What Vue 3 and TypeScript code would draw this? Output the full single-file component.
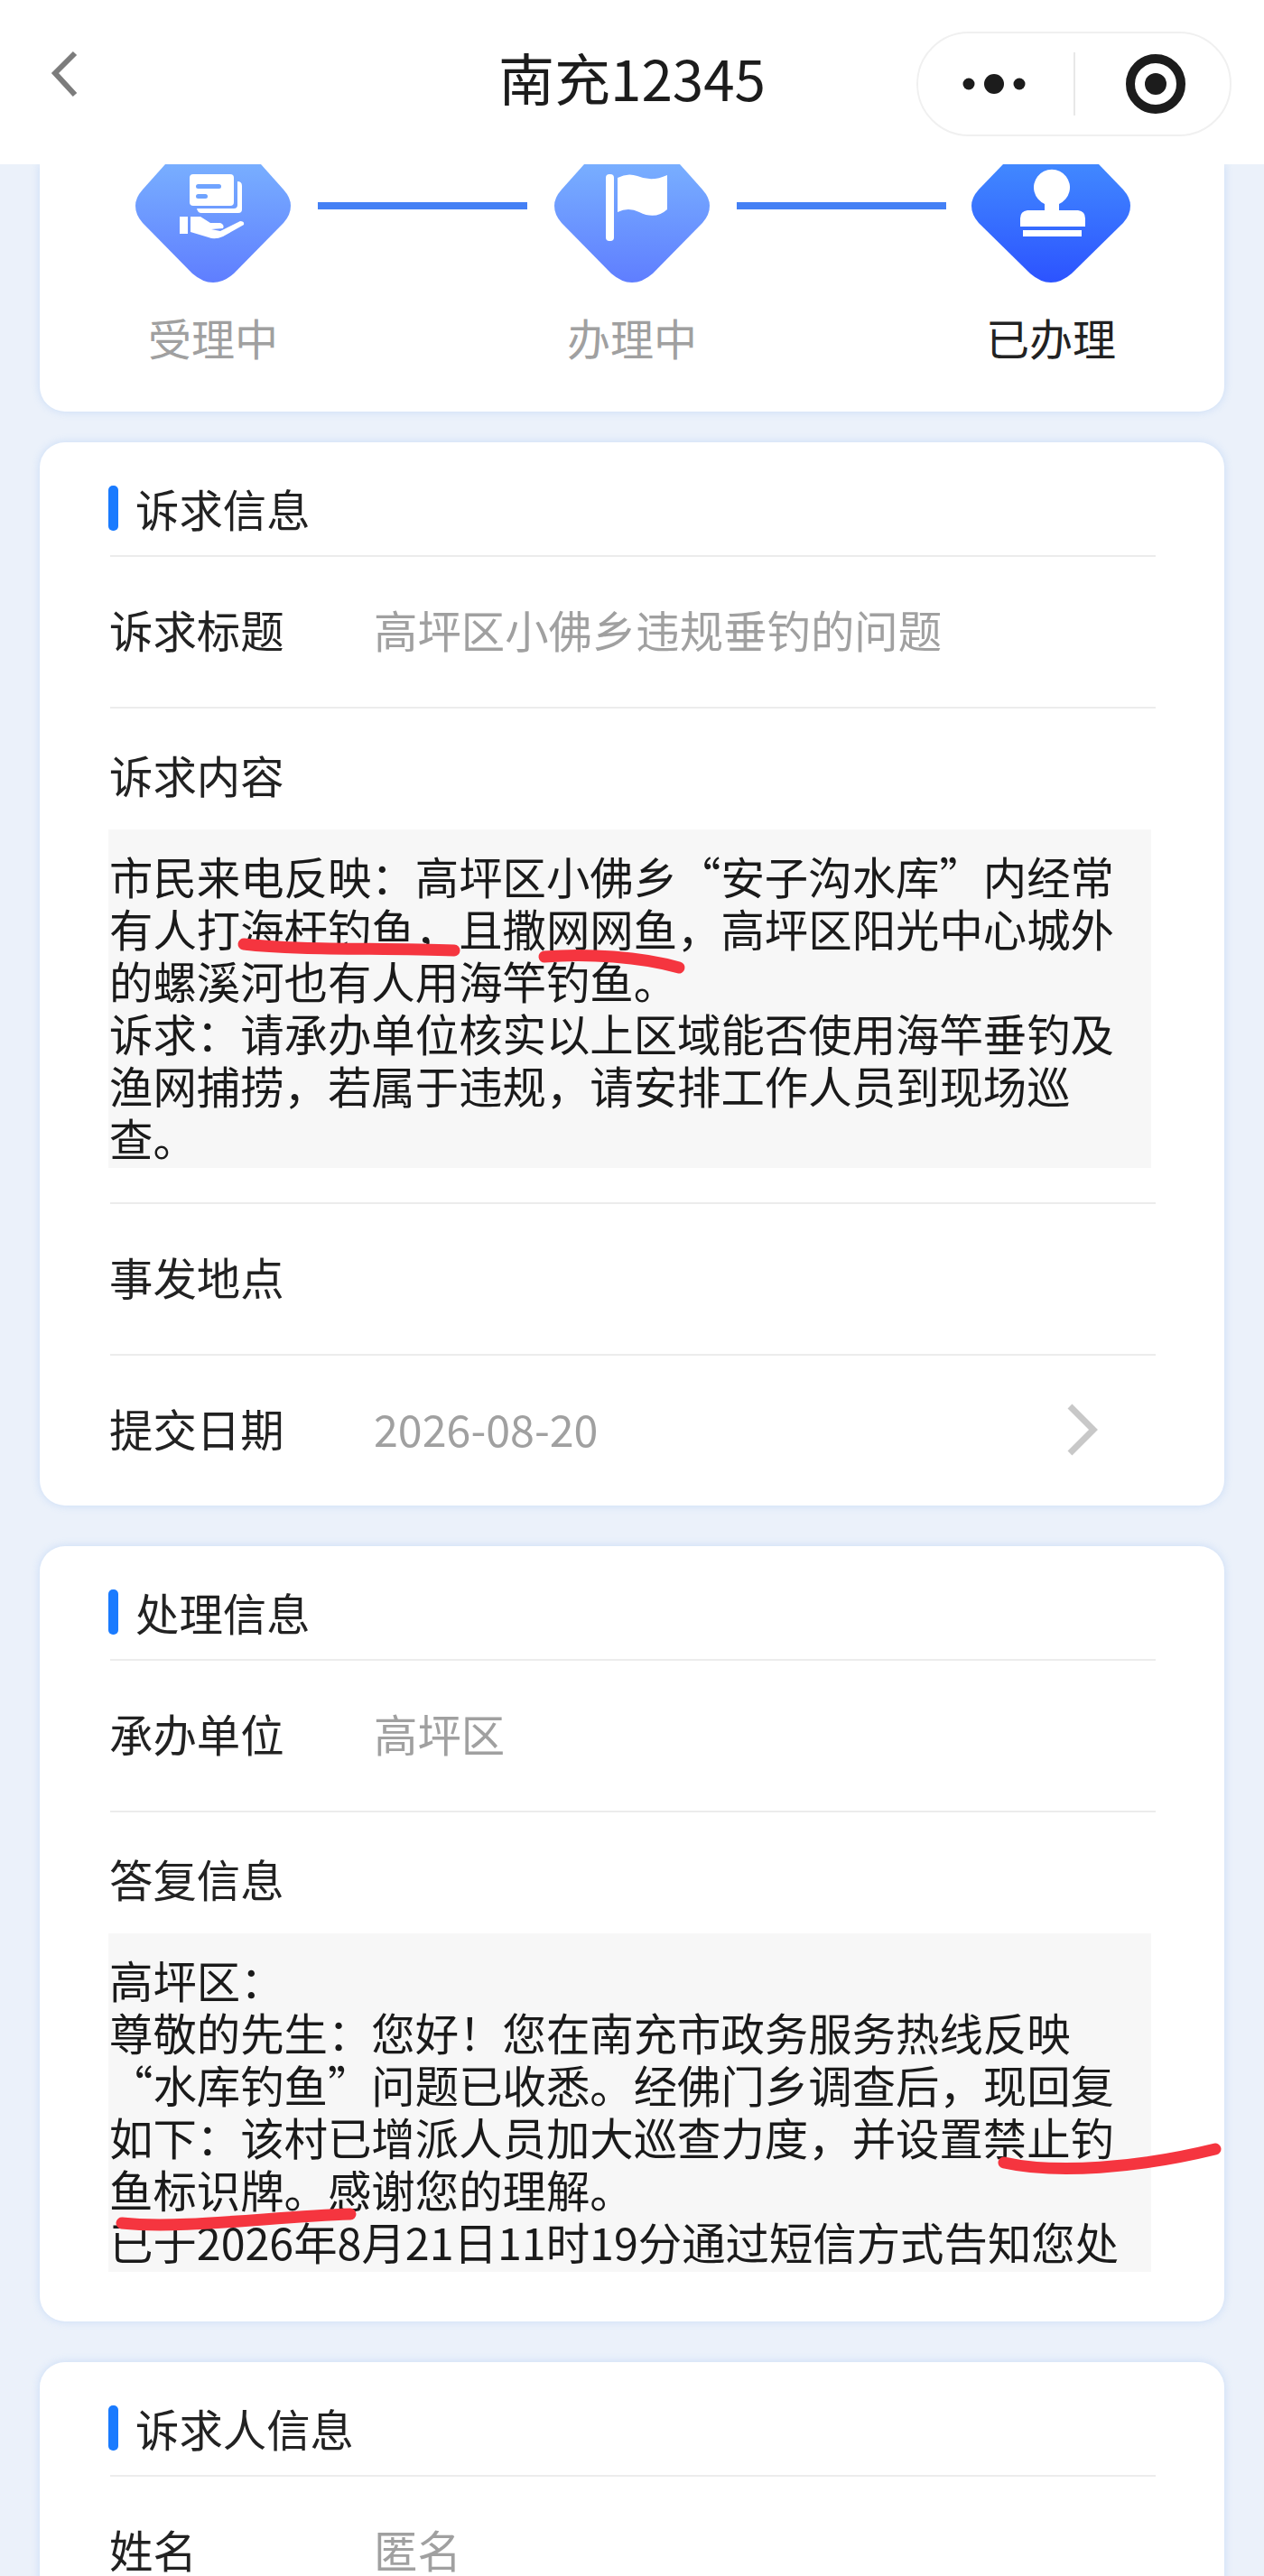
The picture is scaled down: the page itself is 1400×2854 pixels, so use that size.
<script setup lang="ts">
// \uFF1A \uFF0C \uFF01 are the full-width colon, comma and exclamation mark
const complaintText = `市民来电反映\uFF1A高坪区小佛乡“安子沟水库”内经常
有人打海杆钓鱼\uFF0C且撒网网鱼\uFF0C高坪区阳光中心城外
的螺溪河也有人用海竿钓鱼。
诉求\uFF1A请承办单位核实以上区域能否使用海竿垂钓及
渔网捕捞\uFF0C若属于违规\uFF0C请安排工作人员到现场巡
查。`

const replyText = `高坪区\uFF1A
尊敬的先生\uFF1A您好\uFF01您在南充市政务服务热线反映
“水库钓鱼”问题已收悉。经佛门乡调查后\uFF0C现回复
如下\uFF1A该村已增派人员加大巡查力度\uFF0C并设置禁止钓
鱼标识牌。感谢您的理解。
已于2026年8月21日11时19分通过短信方式告知您处`

// gem outlines for the step icons, the done one is a little wider
const softGem = 'M-53 0 L53 0 L78 28 Q86 37 86 46 Q86 56 78 65 L23 121 Q0 141 -23 121 L-78 65 Q-86 56 -86 46 Q-86 37 -78 28 Z'
const strongGem = 'M-53 0 L53 0 L80 28 Q88 37 88 46 Q88 56 80 65 L23 121 Q0 141 -23 121 L-80 65 Q-88 56 -88 46 Q-88 37 -80 28 Z'

// hand-drawn red marks on top of the screenshot
const marks = [
  'M270 1046 C 330 1053, 420 1050, 503 1053',
  'M603 1060 C 650 1056, 710 1060, 752 1072',
  'M1112 2396 C 1170 2409, 1260 2402, 1346 2381',
  'M135 2463 C 200 2470, 300 2456, 388 2453',
]
</script>

<template>
  <div class="page">
    <header class="nav">
      <svg class="nav-back" width="30" height="52" viewBox="0 0 30 52">
        <path d="M27 3 L5 25 L27 49" />
      </svg>
      <div class="nav-title">南充12345</div>
      <div class="capsule">
        <svg class="capsule-more" width="76" height="24" viewBox="0 0 76 24">
          <circle cx="8" cy="12" r="6.5" />
          <circle cx="36" cy="12" r="11" />
          <circle cx="64" cy="12" r="6.5" />
        </svg>
        <span class="capsule-line"></span>
        <svg class="capsule-target" width="66" height="66" viewBox="0 0 66 66">
          <circle cx="33" cy="33" r="28" class="ring" />
          <circle cx="33" cy="33" r="12" />
        </svg>
      </div>
    </header>

    <section class="card steps-card">
      <div class="steps">
        <div class="step">
          <svg width="176" height="131" viewBox="-88 0 176 131">
            <defs>
              <linearGradient id="soft" x1="0" y1="0" x2="0" y2="1">
                <stop offset="0" stop-color="#78aeff" />
                <stop offset="1" stop-color="#5f7eff" />
              </linearGradient>
              <linearGradient id="strong" x1="0" y1="0" x2="0" y2="1">
                <stop offset="0" stop-color="#4188ff" />
                <stop offset="1" stop-color="#2c53ff" />
              </linearGradient>
            </defs>
            <path fill="url(#soft)" :d="softGem" />
            <g fill="#fff">
              <rect x="-26" y="11" width="49" height="35" rx="4" />
              <path d="M27 19 Q32 19 32 24 L32 50 Q32 54 28 54 L-13 54 Q-17 54 -18 49 L23 49 Q27 49 27 45 Z" />
              <rect x="-37" y="58" width="9" height="19" />
              <path d="M-25 58 L-14 58 L-3 65 L8 65 Q13 67 11 71 L-2 72 L8 74 L30 63 Q35 63 34 67 L11 80 Q2 84 -5 81 L-25 75 Z" />
            </g>
            <rect x="-19" y="22" width="28" height="5" rx="2.5" fill="#6fa3ff" />
            <rect x="-19" y="33" width="13" height="5" rx="2.5" fill="#6fa3ff" />
          </svg>
          <span class="step-text">受理中</span>
        </div>
        <div class="step-link"></div>
        <div class="step">
          <svg width="176" height="131" viewBox="-88 0 176 131">
            <path fill="url(#soft)" :d="softGem" />
            <g fill="#fff">
              <rect x="-29" y="11" width="9" height="74" rx="4" />
              <path d="M-16 15 Q-5 9 6 13 Q22 20 39 12 L39 50 Q26 62 8 53 Q-4 47 -16 53 Z" />
            </g>
          </svg>
          <span class="step-text">办理中</span>
        </div>
        <div class="step-link"></div>
        <div class="step">
          <svg width="176" height="131" viewBox="-88 0 176 131">
            <path fill="url(#strong)" :d="strongGem" />
            <g fill="#fff">
              <path d="M-7 44 A20 20 0 1 1 9 44 L9 51 L30 51 Q38 52 38 60 L38 69 L-34 69 L-34 60 Q-34 52 -26 51 L-7 51 Z" />
              <rect x="-31" y="73" width="65" height="7" />
            </g>
          </svg>
          <span class="step-text step-text-done">已办理</span>
        </div>
      </div>
    </section>

    <section class="card">
      <h2 class="section-title">诉求信息</h2>
      <div class="row">
        <span class="row-label">诉求标题</span>
        <span class="row-value">高坪区小佛乡违规垂钓的问题</span>
      </div>
      <div class="block">
        <div class="row-label">诉求内容</div>
        <div class="block-text">{{ complaintText }}</div>
      </div>
      <div class="row">
        <span class="row-label">事发地点</span>
      </div>
      <div class="row row-last">
        <span class="row-label">提交日期</span>
        <span class="row-value">2026-08-20</span>
        <svg class="row-arrow" width="36" height="60" viewBox="0 0 36 60">
          <path d="M5 4 L31 30 L5 56" />
        </svg>
      </div>
    </section>

    <section class="card">
      <h2 class="section-title">处理信息</h2>
      <div class="row">
        <span class="row-label">承办单位</span>
        <span class="row-value">高坪区</span>
      </div>
      <div class="block block-last">
        <div class="row-label">答复信息</div>
        <div class="block-text">{{ replyText }}</div>
      </div>
    </section>

    <section class="card">
      <h2 class="section-title">诉求人信息</h2>
      <div class="row">
        <span class="row-label">姓名</span>
        <span class="row-value">匿名</span>
      </div>
    </section>

    <svg class="marks" width="1400" height="2854" viewBox="0 0 1400 2854">
      <path v-for="(d, i) in marks" :key="i" :d="d" />
    </svg>
  </div>
</template>

<style scoped>
.page {
  position: relative;
  height: 2854px;
  overflow: hidden;
  background: #ebf1fa;
  font-family: "Noto Sans CJK SC", "Noto Sans", sans-serif;
  color: #222;
}

.nav {
  position: relative;
  z-index: 1;
  height: 182px;
  background: #fff;
  display: flex;
  justify-content: center;
  align-items: center;
}
.nav-back {
  position: absolute;
  left: 56px;
  top: 56px;
}
.nav-back path {
  fill: none;
  stroke: #7c7c7c;
  stroke-width: 6;
}
.nav-title {
  font-size: 62px;
  line-height: 70px;
  color: #1c1c1c;
  margin-top: -12px;
}
.capsule {
  position: absolute;
  left: 1015px;
  top: 35px;
  width: 349px;
  height: 116px;
  box-sizing: border-box;
  border: 2px solid #f0f0f0;
  border-radius: 58px;
  display: flex;
  align-items: center;
}
.capsule svg {
  fill: #1c1c1c;
  flex: none;
}
.capsule-more {
  margin-left: 48px;
}
.capsule-line {
  width: 2px;
  height: 70px;
  margin-left: 48px;
  background: #e8e8e8;
}
.capsule-target {
  margin-left: 56px;
}
.capsule-target .ring {
  fill: none;
  stroke: #1c1c1c;
  stroke-width: 10;
}

.card {
  margin: 45px 44px 0;
  padding: 0 76px 0 78px;
  background: #fff;
  border-radius: 28px;
  box-shadow: 0 0 10px rgba(110, 165, 240, 0.28);
}
.steps-card {
  margin-top: 0;
  margin-bottom: -11px;
  padding: 0;
  height: 274px;
  border-radius: 0 0 28px 28px;
}
.steps {
  display: flex;
  padding-left: 104px;
}
.step {
  width: 176px;
  display: flex;
  flex-direction: column;
  align-items: center;
}
.step svg {
  display: block;
}
.step-text {
  margin-top: 34px;
  font-size: 48px;
  line-height: 52px;
  color: #a0a0a0;
}
.step-text-done {
  color: #222;
}
.step-link {
  width: 232px;
  height: 8px;
  margin: 42px 28px 0;
  background: #4480f5;
}

.section-title {
  position: relative;
  margin: 0;
  padding: 48px 0 27px 28px;
  font-size: 48.4px;
  font-weight: 400;
  line-height: 50px;
  color: #222;
  border-bottom: 2px solid #ececec;
}
.section-title::before {
  content: "";
  position: absolute;
  left: -2px;
  top: 48px;
  width: 11px;
  height: 50px;
  border-radius: 5px;
  background: #1a7bff;
}
.row {
  position: relative;
  height: 166px;
  display: flex;
  align-items: center;
  border-bottom: 2px solid #ececec;
}
.row-last {
  border-bottom: 0;
}
.row-label {
  width: 293px;
  flex: none;
  margin-left: -1px;
  font-size: 48.4px;
  line-height: 52px;
  color: #222;
}
.row-value {
  margin-top: -6px;
  font-size: 48.4px;
  line-height: 52px;
  color: #a0a0a0;
}
.row .row-label {
  margin-top: -6px;
}
.row-arrow {
  position: absolute;
  right: 64px;
  top: 52px;
}
.row-arrow path {
  fill: none;
  stroke: #c8c8c8;
  stroke-width: 7;
}
.block {
  padding-top: 47px;
  padding-bottom: 38px;
  border-bottom: 2px solid #ececec;
}
.block-last {
  padding-bottom: 55px;
  border-bottom: 0;
}
.block-text {
  height: 375px;
  box-sizing: border-box;
  margin: 35px 5px 0 -2px;
  padding: 22px 0 0 1px;
  overflow: hidden;
  background: #f7f7f7;
  font-size: 48.4px;
  line-height: 58px;
  color: #1a1a1a;
  white-space: pre;
}

.marks {
  position: absolute;
  left: 0;
  top: 0;
  pointer-events: none;
}
.marks path {
  fill: none;
  stroke: #f5353f;
  stroke-width: 13;
  stroke-linecap: round;
}
</style>

<style>
body {
  margin: 0;
}
</style>
